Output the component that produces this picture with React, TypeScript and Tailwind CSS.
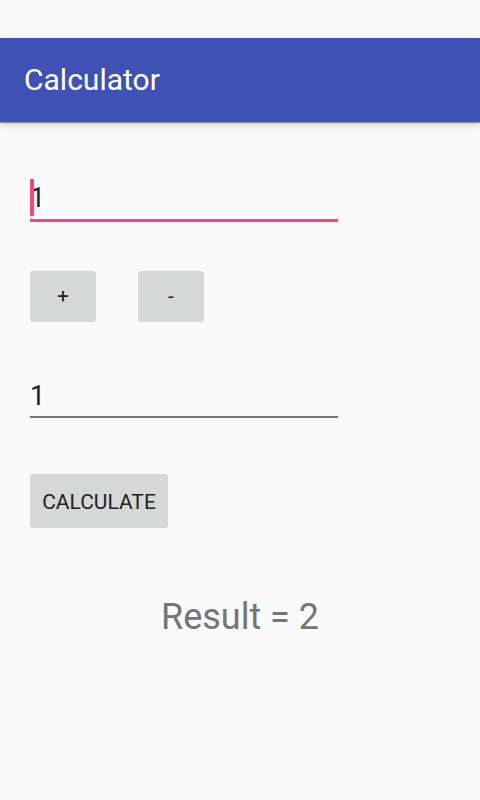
export default function App() {
  return (
    <div
      className="w-[480px] h-[800px] bg-[#fafafa] overflow-hidden"
      style={{ fontFamily: "Roboto, 'Liberation Sans', sans-serif" }}
    >
      {/* Status bar area */}
      <div className="h-[38px] bg-[#fafafa]" />

      {/* Toolbar */}
      <div className="relative z-10 h-[84px] bg-[#3f51b5] flex items-center pl-[24px] shadow-[0_1px_1px_rgba(0,0,0,0.35),0_3px_8px_rgba(0,0,0,0.18)]">
        <h1 className="text-white text-[30px] leading-none">Calculator</h1>
      </div>

      <div className="px-[30px]">
        {/* First number (focused) */}
        <div className="relative w-[308px] mt-[58px] pb-[3px] border-b-[3px] border-[#ff4081]">
          <div className="text-[27px] leading-[36px] text-[#212121]">1</div>
          <span className="absolute left-0 top-[-1px] w-[4px] h-[37px] bg-[#ff4081]" />
        </div>

        {/* Operators */}
        <div className="flex gap-[42px] mt-[49px]">
          <button className="w-[66px] h-[51px] rounded-[3px] bg-[#d6d7d7] text-[21px] text-[#212121] flex items-center justify-center">
            +
          </button>
          <button className="w-[66px] h-[51px] rounded-[3px] bg-[#d6d7d7] text-[21px] text-[#212121] flex items-center justify-center">
            -
          </button>
        </div>

        {/* Second number */}
        <div className="w-[308px] mt-[56px] pb-[2px] border-b-2 border-[#757575]">
          <div className="text-[27px] leading-[36px] text-[#212121]">1</div>
        </div>

        {/* Calculate */}
        <button className="mt-[56px] w-[138px] h-[54px] pt-[3px] rounded-[3px] bg-[#d6d7d7] text-[21px] text-[#212121] flex items-center justify-center">
          CALCULATE
        </button>
      </div>

      {/* Result */}
      <p className="mt-[68px] text-center text-[36px] leading-[42px] text-[#757575]">
        Result = 2
      </p>
    </div>
  );
}
